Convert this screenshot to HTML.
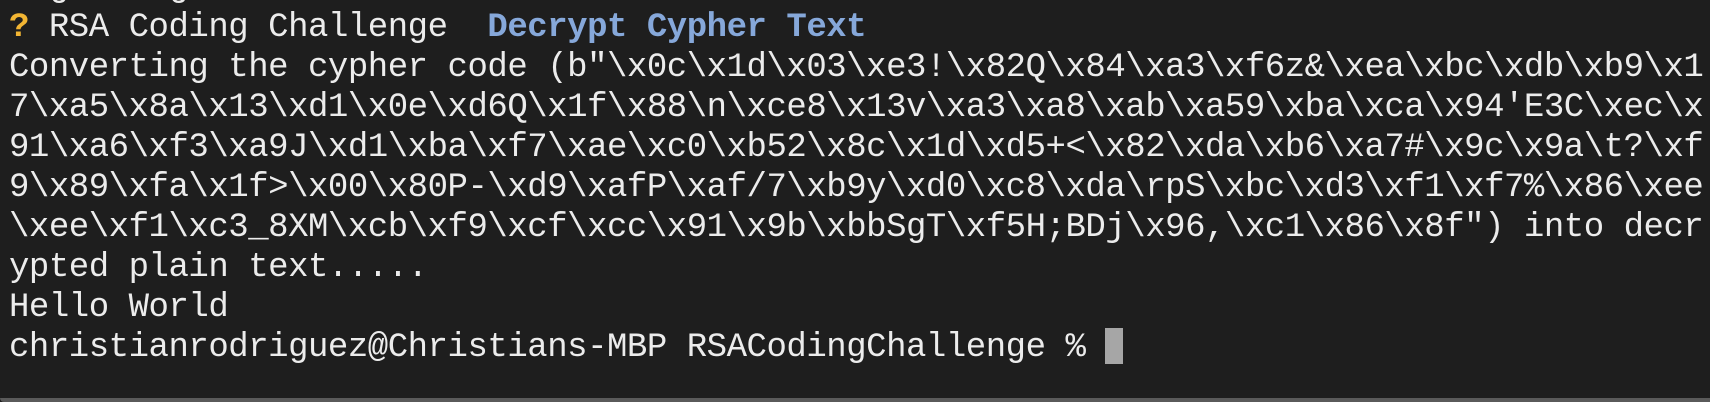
<!DOCTYPE html>
<html><head><meta charset="utf-8"><style>
html,body{margin:0;padding:0;}
body{width:1710px;height:402px;background:#1e1e1e;overflow:hidden;position:relative;}
pre{position:absolute;left:9px;top:-32px;margin:0;font-family:"Liberation Mono",monospace;font-size:34px;letter-spacing:-0.47px;line-height:40px;color:#ececec;white-space:pre;}
.y{color:#f2b533;font-weight:bold}
.b{color:#86a8da;font-weight:bold}
.cur{display:inline-block;width:18px;height:36px;background:#a6a6a6;vertical-align:-8px;}
.bot{position:absolute;left:0;right:0;bottom:0;height:4px;background:#5a5a5a;border-bottom-left-radius:10px;}
</style></head><body>
<pre>  g     g            
<span class="y">?</span> RSA Coding Challenge  <span class="b">Decrypt Cypher Text</span>
Converting the cypher code (b"\x0c\x1d\x03\xe3!\x82Q\x84\xa3\xf6z&amp;\xea\xbc\xdb\xb9\x1
7\xa5\x8a\x13\xd1\x0e\xd6Q\x1f\x88\n\xce8\x13v\xa3\xa8\xab\xa59\xba\xca\x94'E3C\xec\x
91\xa6\xf3\xa9J\xd1\xba\xf7\xae\xc0\xb52\x8c\x1d\xd5+&lt;\x82\xda\xb6\xa7#\x9c\x9a\t?\xf
9\x89\xfa\x1f&gt;\x00\x80P-\xd9\xafP\xaf/7\xb9y\xd0\xc8\xda\rpS\xbc\xd3\xf1\xf7%\x86\xee
\xee\xf1\xc3_8XM\xcb\xf9\xcf\xcc\x91\x9b\xbbSgT\xf5H;BDj\x96,\xc1\x86\x8f") into decr
ypted plain text.....
Hello World
christianrodriguez@Christians-MBP RSACodingChallenge % <span class="cur"></span></pre>
<div class="bot"></div>
</body></html>
